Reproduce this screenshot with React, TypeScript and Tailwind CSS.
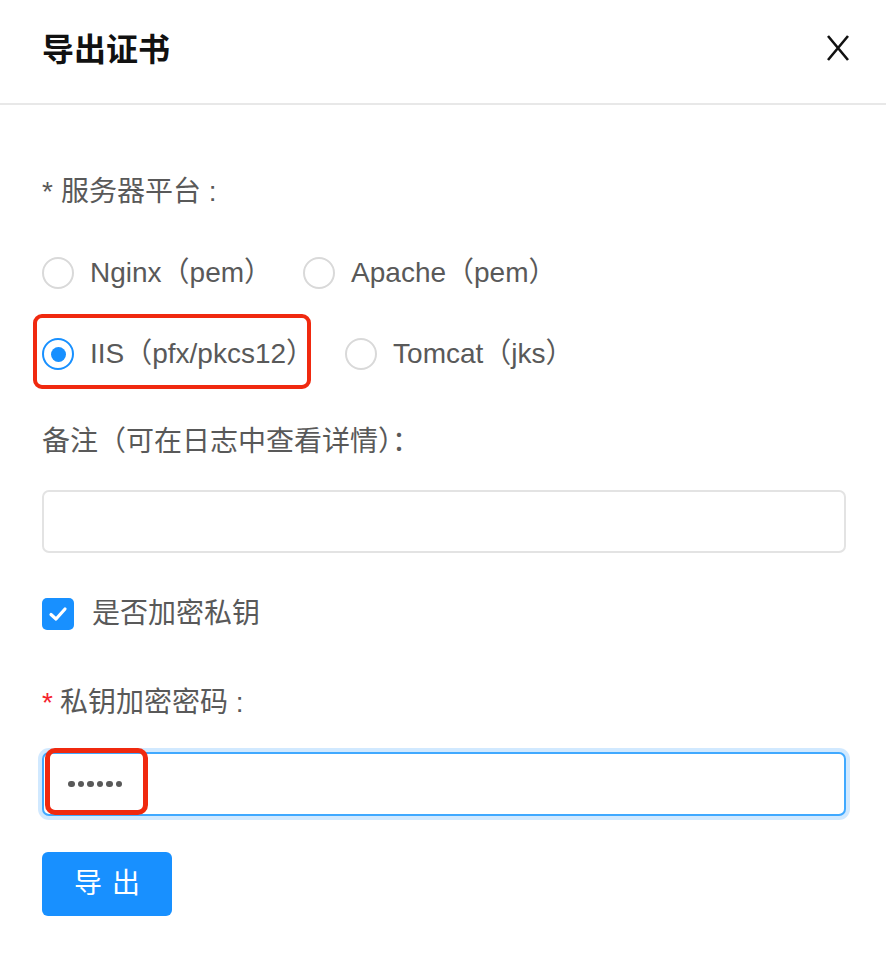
import React from "react";

const font = { fontFamily: '"Liberation Sans", "Noto Sans CJK SC", sans-serif' };

function Radio({ checked, label }: { checked?: boolean; label: string }) {
  return (
    <div className="flex items-center h-[40px]">
      <div
        className={
          checked
            ? "w-[32px] h-[32px] rounded-full border-2 border-[#1890ff] flex items-center justify-center bg-white"
            : "w-[32px] h-[32px] rounded-full border-2 border-[#d9d9d9] bg-white"
        }
      >
        {checked ? <div className="w-[15px] h-[15px] rounded-full bg-[#1890ff]" /> : null}
      </div>
      <span className="ml-[16px] text-[28px] text-[#595959] leading-[40px] whitespace-nowrap">{label}</span>
    </div>
  );
}

export default function App() {
  return (
    <div className="w-[886px] h-[954px] bg-white relative overflow-hidden" style={font}>
      <div className="h-[105px] border-b-2 border-[#e8e8e8] flex items-center justify-between pl-[42px] pr-[36px]">
        <span className="text-[32px] font-bold text-[#111] leading-[40px] mb-[4px]">导出证书</span>
        <svg width="24" height="26" viewBox="0 0 24 26" className="mb-[8px]">
          <path d="M2 1 L22 25 M22 1 L2 25" stroke="#111" strokeWidth="2.6" fill="none" />
        </svg>
      </div>

      <div className="pl-[42px] pr-[40px] pt-[67px]">
        <div className="h-[40px] flex items-center text-[28px] text-[#595959] leading-[40px]">
          <span className="mr-[8px]">*</span>
          <span>服务器平台 :</span>
        </div>

        <div className="mt-[41px] flex items-center gap-[31px]">
          <Radio label="Nginx（pem）" />
          <Radio label="Apache（pem）" />
        </div>

        <div className="mt-[41px] flex items-center gap-[31px]">
          <div className="relative">
            <Radio checked label="IIS（pfx/pkcs12）" />
            <div className="absolute left-[-9px] right-[3px] top-[-20px] bottom-[-15px] border-[4px] border-[#f0290f] rounded-[9px]" />
          </div>
          <Radio label="Tomcat（jks）" />
        </div>

        <div className="mt-[48px] h-[40px] text-[28px] text-[#595959] leading-[40px]">备注（可在日志中查看详情）：</div>

        <div className="mt-[28px] h-[63px] border-2 border-[#e3e3e3] rounded-[7px] bg-white" />

        <div className="mt-[41px] h-[40px] flex items-center">
          <div className="w-[32px] h-[32px] rounded-[5px] bg-[#1890ff] flex items-center justify-center">
            <svg width="20" height="16" viewBox="0 0 20 16">
              <path d="M3 8.5 L8 13 L17 3" stroke="#fff" strokeWidth="3.2" fill="none" strokeLinecap="round" strokeLinejoin="round" />
            </svg>
          </div>
          <span className="ml-[18px] text-[28px] text-[#595959] leading-[40px]">是否加密私钥</span>
        </div>

        <div className="mt-[49px] h-[40px] flex items-center text-[28px] text-[#595959] leading-[40px]">
          <span className="text-[#f5222d] mr-[7px]">*</span>
          <span>私钥加密密码 :</span>
        </div>

        <div className="mt-[29px] relative h-[64px] border-2 border-[#40a9ff] rounded-[7px] bg-white shadow-[0_0_0_4px_rgba(24,144,255,0.2)] flex items-center pl-[24px]">
          <div className="flex items-center gap-[3px]">
            <div className="w-[6.5px] h-[6.5px] rounded-full bg-[#595959]" />
            <div className="w-[6.5px] h-[6.5px] rounded-full bg-[#595959]" />
            <div className="w-[6.5px] h-[6.5px] rounded-full bg-[#595959]" />
            <div className="w-[6.5px] h-[6.5px] rounded-full bg-[#595959]" />
            <div className="w-[6.5px] h-[6.5px] rounded-full bg-[#595959]" />
            <div className="w-[6.5px] h-[6.5px] rounded-full bg-[#595959]" />
          </div>
          <div className="absolute left-[1px] top-[-6px] w-[103px] h-[67px] border-[5px] border-[#f0290f] rounded-[10px]" />
        </div>

        <div className="mt-[36px] w-[130px] h-[64px] rounded-[6px] bg-[#1890ff] flex items-center justify-center">
          <span className="text-[28px] text-white leading-[40px] tracking-[10px] ml-[10px]">导出</span>
        </div>
      </div>
    </div>
  );
}
